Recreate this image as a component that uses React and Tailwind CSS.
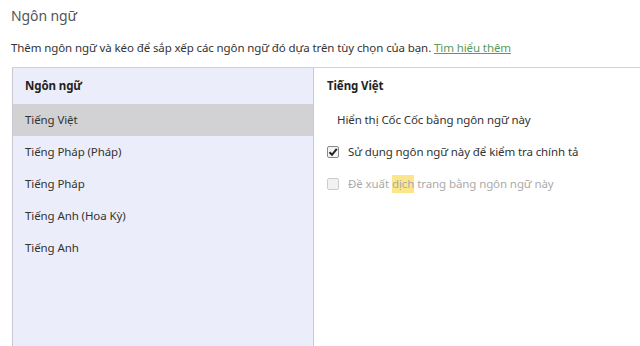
export default function App() {
  const langs = ["Tiếng Việt", "Tiếng Pháp (Pháp)", "Tiếng Pháp", "Tiếng Anh (Hoa Kỳ)", "Tiếng Anh"];
  return (
    <div className="w-[640px] h-[346px] bg-white overflow-hidden flex flex-col text-[#333] tracking-[-0.1px]" style={{ fontFamily: '"Noto Sans", "Open Sans", sans-serif' }}>
      <div className="pl-[11px] pt-[5px] h-[27px] text-[14px] leading-[22px] text-[#555]">Ngôn ngữ</div>
      <div className="pl-[11px] mt-[12px] text-[11.5px] leading-[18px] text-[#333]">
        Thêm ngôn ngữ và kéo để sắp xếp các ngôn ngữ đó dựa trên tùy chọn của bạn.{" "}
        <span className="text-[#5b9b5b] underline">Tìm hiểu thêm</span>
      </div>
      <div className="mt-[10px] border-t border-[#d2d2d8] flex flex-1 ml-[12px]">
        <div className="w-[302px] bg-[#ebeefa] border-l border-r border-[#c8c8d0] flex flex-col">
          <div className="h-[36px] flex items-center pl-[12px] text-[11.5px] font-bold text-[#222]">Ngôn ngữ</div>
          {langs.map((l, i) => (
            <div key={l} className={`h-[32px] flex items-center pl-[12px] text-[11.5px] text-[#333] ${i === 0 ? "bg-[#d2d2d4]" : ""}`}>{l}</div>
          ))}
        </div>
        <div className="flex-1 flex flex-col pl-[13px] text-[11.5px]">
          <div className="h-[36px] flex items-center font-bold text-[#222]">Tiếng Việt</div>
          <div className="h-[32px] flex items-center pl-[10px] text-[#333]">Hiển thị Cốc Cốc bằng ngôn ngữ này</div>
          <div className="h-[32px] flex items-center text-[#333]">
            <span className="w-[12px] h-[12px] border border-[#888] bg-[#f4f4f4] rounded-[2px] flex items-center justify-center mr-[9px]">
              <svg width="10" height="10" viewBox="0 0 10 10"><path d="M1.5 5.2 L4 7.8 L8.8 1.8" stroke="#222" strokeWidth="2" fill="none" /></svg>
            </span>
            Sử dụng ngôn ngữ này để kiểm tra chính tả
          </div>
          <div className="h-[32px] flex items-center text-[#aaa]">
            <span className="w-[12px] h-[12px] border border-[#ccc] bg-[#f2f2f2] rounded-[2px] mr-[9px]"></span>
            Đề xuất <span className="bg-[#fbe68a] mx-[3px]">dịch</span> trang bằng ngôn ngữ này
          </div>
        </div>
      </div>
    </div>
  );
}
